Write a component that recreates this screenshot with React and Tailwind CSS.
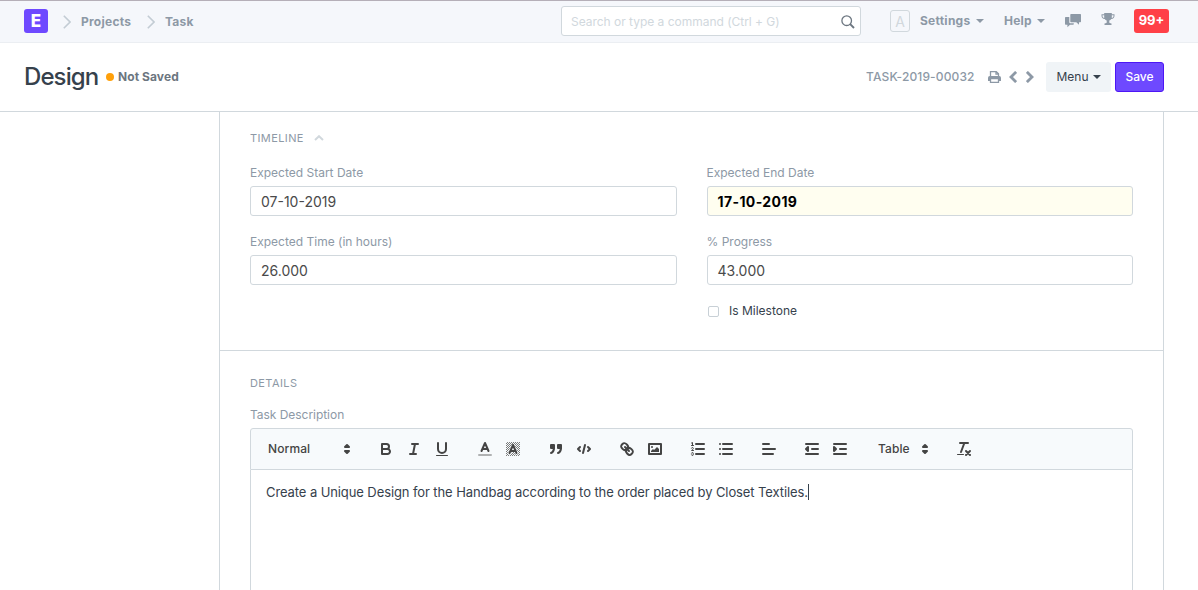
const Icon = ({ children, className = "" }) => (
  <svg viewBox="0 0 18 18" className={`h-[18px] w-[18px] shrink-0 fill-none stroke-[#444] stroke-2 [stroke-linecap:round] [stroke-linejoin:round] ${className}`}>
    {children}
  </svg>
);

const F = "fill-[#444] stroke-none";
const thin = "[stroke-width:1]";

const Updown = () => (
  <Icon>
    <polygon className="fill-[#444]" points="7 11 9 13 11 11 7 11" />
    <polygon className="fill-[#444]" points="7 7 9 5 11 7 7 7" />
  </Icon>
);

const Caret = () => (
  <svg viewBox="0 0 8 4" className="h-1 w-2 fill-current">
    <path d="M0 0h8L4 4z" />
  </svg>
);

const Crumb = () => (
  <svg viewBox="0 0 8 14" className="h-3.5 w-2 fill-none stroke-[#c3ccd4] [stroke-width:1.6]">
    <path d="M.8 .8L7 7L.8 13.2" />
  </svg>
);

const Navbar = () => (
  <header className="flex h-[43px] items-start border-t border-b border-t-[#b5afb8] border-b-[#ebeef2] bg-[#f5f7fb] font-bold text-[#8d99a6]">
    <div className="flex h-10 w-[561px] items-center pl-6">
      <div className="flex h-6 w-6 items-center justify-center rounded-[3px] bg-[#6e49ff] text-[17px] leading-6 font-extrabold text-white">
        E
      </div>
      <div className="ml-[15px] pt-px"><Crumb /></div>
      <span className="ml-2.5 w-[66px] pt-[2px] text-[12px] tracking-[0.25px]">Projects</span>
      <div className="pt-px"><Crumb /></div>
      <span className="ml-2.5 pt-[2px] text-[12px] tracking-[0.2px]">Task</span>
    </div>
    <div className="mt-[5px] flex h-[30px] w-[300px] items-center justify-between rounded-[3px] border border-[#d1d8dd] bg-white pt-px pr-[5px] pl-[9px] font-normal text-[#d1d8dd]">
      <span className="text-[12px] tracking-[-0.02px]">Search or type a command (Ctrl + G)</span>
      <svg viewBox="0 0 14 14" className="h-3.5 w-3.5 fill-none stroke-[#6c7680]">
        <circle cx="5.7" cy="5.7" r="4.8" strokeWidth="1.3" />
        <path d="M9.2 9.2L13 13" strokeWidth="1.9" />
      </svg>
    </div>
    <div className="flex h-10 items-center pl-[29px]">
      <div className="flex h-[22px] w-5 items-center justify-center rounded-[3px] border border-[#d1d8dd] text-[14px] font-normal text-[#d1d8dd]">A</div>
      <span className="ml-2.5 w-[56px] text-[12px] tracking-[0.25px]">Settings</span>
      <Caret />
      <span className="ml-5 w-[33px] text-[12px] tracking-[0.2px]">Help</span>
      <Caret />
      <svg viewBox="0 0 16 14" className="ml-5 h-3.5 w-4 fill-current">
        <path d="M6 0h9.300q.7 0 .7.7v6.800q0 .7-.7.7H14v2.600L11.300 8.200H6q-.7 0-.7-.7V.7q0-.7.7-.7z" />
        <path d="M.7 3h3.600v5.300q0 .9.900.9h3.600v.8q0 .7-.7.7H5l-2.600 2.600v-2.600H.7q-.7 0-.7-.7V3.700Q0 3 .7 3z" />
      </svg>
      <svg viewBox="0 0 14 12" className="mb-1 ml-5 h-3 w-3.5 fill-current">
        <path fillRule="evenodd" d="M3.200 0h7.600v1.200h2.700v1.600c0 1.900-1.200 3-3.200 3.300C9.800 6.800 9 7.400 8.300 7.600v1.600c0 .7.600 1 2.200 1.300V12h-7v-1.500c1.600-.3 2.200-.6 2.200-1.300V7.600C5 7.400 4.200 6.800 3.700 6.100 1.700 5.800.5 4.700.5 2.800V1.200h2.700zM1.500 2.200v.7c0 1 .6 1.700 1.700 2V2.200zM10.800 2.200v2.700c1.100-.3 1.700-1 1.700-2v-.7z" />
      </svg>
      <div className="ml-[19px] flex h-6 w-[35px] items-center justify-center rounded-[3px] bg-[#ff4047] text-[13px] text-white">99+</div>
    </div>
  </header>
);

const PageHead = () => (
  <div className="flex h-[69px] items-center border-b border-[#d1d8dd] pr-[34px] pl-6 text-[12px]">
    <h1 className="w-[82px] text-[24px] font-medium tracking-[-0.9px] text-[#36414c]">Design</h1>
    <span className="h-2 w-2 rounded-full bg-[#ffa00a]" />
    <span className="ml-1 font-bold tracking-[0.08px] text-[#6c7680]">Not Saved</span>
    <span className="ml-auto w-[122px] font-medium tracking-[0.13px] text-[#8d99a6]">TASK-2019-00032</span>
    <svg viewBox="0 0 13 12" className="h-3 w-[13px] fill-none stroke-[#8d99a6] [stroke-width:1.3]">
      <path d="M2.500 6V.65h5.800l2.200 2.200V6M8 .8v2.300h2.300" />
      <path className="fill-[#8d99a6] stroke-none" d="M1.800 5h9.400Q13 5 13 6.800V10H0V6.800Q0 5 1.800 5z" />
      <path className="fill-white" d="M2.500 7.700h8v3.650h-8z" />
    </svg>
    <svg viewBox="0 0 8 12" className="ml-2 h-3 w-2 fill-none stroke-[#8d99a6] [stroke-width:2.800]">
      <path d="M7.100 .9L2 6L7.100 11.100" />
    </svg>
    <svg viewBox="0 0 8 12" className="ml-[9px] h-3 w-2 fill-none stroke-[#8d99a6] [stroke-width:2.800]">
      <path d="M.9 .9L6 6L.9 11.100" />
    </svg>
    <button className="ml-3 flex h-[30px] w-[65px] items-center justify-center gap-1 rounded-[3px] bg-[#f0f4f7] text-[#36414c]">
      Menu <Caret />
    </button>
    <button className="ml-1 h-[30px] w-[49px] rounded-[3px] border border-[#4d16f5] bg-[#6e49ff] font-medium text-white">Save</button>
  </div>
);

const Field = ({ label, value, required }) => (
  <div className="h-[69px]">
    <div className="h-[22px] pt-px text-[12px] leading-4 text-[#8d99a6]">{label}</div>
    <div className={`flex h-[30px] items-center rounded-[3px] border border-[#d1d8dd] px-2.5 pt-px text-[14px] ${required ? "bg-[#fffef0] font-bold tracking-[0.4px] text-black" : "text-[#4a4a4a]"}`}>
      {value}
    </div>
  </div>
);

const hatch = [-12, -10, -8, -6, -4, -2, 0, 2, 4, 6, 8, 10, 12];

const Toolbar = () => (
  <div className="flex h-[42px] items-center rounded-t-[3px] border border-[#d1d8dd] bg-[#f7fafc] pl-[17px] text-[12px] font-medium tracking-[0.1px] text-[#444]">
    <span className="w-[70px]">Normal</span>
    <Updown />
    <div className="ml-[21px] flex gap-2.5">
      <Icon>
        <path d="M5,4H9.500A2.500,2.500,0,0,1,12,6.500v0A2.500,2.500,0,0,1,9.500,9H5V4Z" />
        <path d="M5,9h5.500A2.500,2.500,0,0,1,13,11.500v0A2.500,2.500,0,0,1,10.500,14H5V9Z" />
      </Icon>
      <Icon><path d="M7 4H13M5 14H11M8 14L10 4" /></Icon>
      <Icon>
        <path d="M5,3V9a4.012,4.012,0,0,0,4,4H9a4.012,4.012,0,0,0,4-4V3" />
        <rect className={F} height="1" rx=".5" width="12" x="3" y="15" />
      </Icon>
    </div>
    <div className="ml-[25px] flex gap-2.5">
      <Icon>
        <path className="opacity-40" d="M3 15H15" />
        <path d="M5.500 11L9 3L12.500 11M11.630 9H6.380" />
      </Icon>
      <Icon>
        <svg x="2" y="2" width="14" height="14" viewBox="0 0 14 14" overflow="hidden" className="[stroke-width:0.7]">
          {hatch.map((n) => <path key={n} d={`M${n} 14L${n + 14} 0`} />)}
          <path className="stroke-[#f7fafc] [stroke-width:3.500]" d="M3.500 11L7 4L10.500 11" />
        </svg>
        <path d="M5.500 13L9 5L12.500 13M11.630 11H6.380" />
      </Icon>
    </div>
    <div className="ml-[25px] flex gap-2.5">
      <Icon>
        <rect className="fill-[#444]" height="3" width="3" x="4" y="5" />
        <rect className="fill-[#444]" height="3" width="3" x="11" y="5" />
        <path className="fill-[#444]" d="M7,8c0,4.031-3,5-3,5M14,8c0,4.031-3,5-3,5" />
      </Icon>
      <Icon><path d="M5 7L3 9L5 11M13 7L15 9L13 11M10 5L8 13" /></Icon>
    </div>
    <div className="ml-[25px] flex gap-2.5">
      <Icon>
        <path d="M7 7L11 11" />
        <path d="M8.900,4.577a3.476,3.476,0,0,1,.36,4.679A3.476,3.476,0,0,1,4.577,8.900C3.185,7.500,2.035,6.400,4.217,4.217S7.500,3.185,8.900,4.577Z" />
        <path d="M13.423,9.100a3.476,3.476,0,0,0-4.679-.36,3.476,3.476,0,0,0,.36,4.679c1.392,1.392,2.500,2.542,4.679.36S14.815,10.500,13.423,9.100Z" />
      </Icon>
      <Icon>
        <rect height="10" width="12" x="3" y="4" />
        <circle className={F} cx="6" cy="7" r="1" />
        <path className={F} d="M5 12V11L7 9L8 10L11 7L13 9V12Z" />
      </Icon>
    </div>
    <div className="ml-[25px] flex gap-2.5">
      <Icon>
        <path d="M7 4H15M7 9H15M7 14H15" />
        <path className={thin} d="M2.500 5.500H4.500M3.500 5.500V2.500L2.500 3" />
        <path className={thin} d="M4.500,10.500h-2c0-.234,1.850-1.076,1.850-2.234A0.959,0.959,0,0,0,2.500,8.156" />
        <path className={thin} d="M2.500,14.846a0.959,0.959,0,0,0,1.850-.109A0.700,0.700,0,0,0,3.750,14a0.688,0.688,0,0,0,.6-0.736,0.959,0.959,0,0,0-1.850-.109" />
      </Icon>
      <Icon><path d="M6 4H15M6 9H15M6 14H15M3 4H3M3 9H3M3 14H3" /></Icon>
    </div>
    <div className="ml-[25px]">
      <Icon><path d="M3 9H15M3 14H13M3 4H9" /></Icon>
    </div>
    <div className="ml-[25px] flex gap-2.5">
      <Icon>
        <path d="M3 14H15M3 4H15M9 9H15" />
        <path className="fill-[#444]" d="M5 7V11L3 9Z" />
      </Icon>
      <Icon>
        <path d="M3 14H15M3 4H15M9 9H15" />
        <path className="fill-[#444]" d="M3 7V11L5 9Z" />
      </Icon>
    </div>
    <span className="ml-[29px] w-[38px]">Table</span>
    <Updown />
    <div className="ml-[21px]">
      <Icon>
        <path d="M5 3H13M6 12L9.350 3M11 11L15 15M15 11L11 15" />
        <rect className={F} height="1" rx=".5" width="7" x="2" y="14" />
      </Icon>
    </div>
  </div>
);

export default function App() {
  return (
    <div className="flex h-[590px] w-[1198px] flex-col overflow-hidden bg-white font-['Inter',sans-serif]">
      <Navbar />
      <PageHead />
      <main className="ml-[219px] flex w-[945px] flex-1 flex-col border-x border-[#d1d8dd]">
        <section className="h-[239px] border-b border-[#d1d8dd] px-[30px] pt-[18px]">
          <div className="flex h-[34px] items-start text-[11px] leading-4 tracking-[0.4px] text-[#8d99a6]">
            TIMELINE
            <svg viewBox="0 0 10 6" className="mt-[5px] ml-2.5 h-1.5 w-2.5 fill-none stroke-[#d1d8dd] stroke-2">
              <path d="M1 5L5 1.200L9 5" />
            </svg>
          </div>
          <div className="grid grid-cols-2 gap-x-[30px]">
            <Field label="Expected Start Date" value="07-10-2019" />
            <Field label="Expected End Date" value="17-10-2019" required />
            <Field label="Expected Time (in hours)" value="26.000" />
            <Field label="% Progress" value="43.000" />
            <label className="col-start-2 flex h-[18px] items-center gap-2.5 pl-[1.5px] text-[12px] text-[#36414c]">
              <span className="h-[11px] w-[11px] rounded-[2px] border border-[#c8d0d6]" />
              Is Milestone
            </label>
          </div>
        </section>
        <section className="flex flex-1 flex-col px-[30px] pt-6">
          <div className="h-8 text-[11px] leading-4 tracking-[0.4px] text-[#8d99a6]">DETAILS</div>
          <div className="h-[21px] text-[12px] leading-4 tracking-[-0.04px] text-[#8d99a6]">Task Description</div>
          <Toolbar />
          <div className="flex flex-1 items-start border-x border-[#d1d8dd] px-[15px] pt-[13px] text-[13px] leading-[18px] tracking-[-0.095px] text-[#36414c]">
            <span>Create a Unique Design for the Handbag according to the order placed by Closet Textiles.</span>
            <span className="mt-px h-4 w-px bg-[#36414c]" />
          </div>
        </section>
      </main>
    </div>
  );
}
